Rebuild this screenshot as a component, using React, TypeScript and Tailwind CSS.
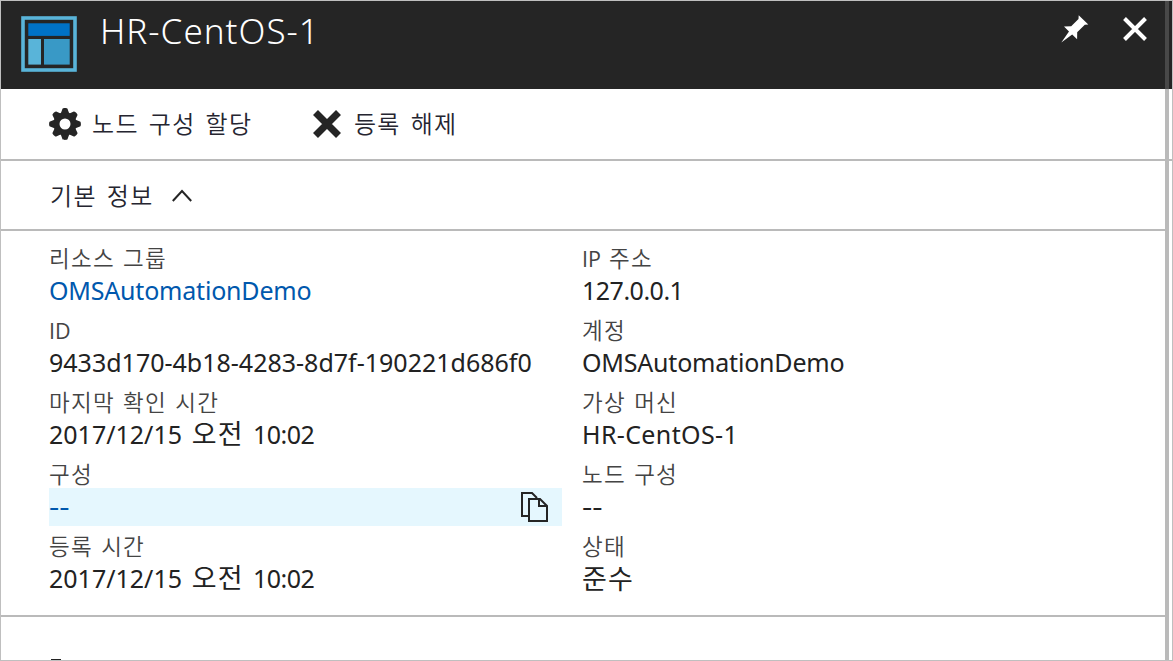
import React from "react";

const kr = "font-['Noto_Sans_CJK_KR',sans-serif]";

type Field = { label: React.ReactNode; value: React.ReactNode; link?: boolean; copy?: boolean };

const K = ({ children }: { children: React.ReactNode }) => (
  <span className="block font-['Noto_Sans_CJK_KR',sans-serif] text-[22.5px] font-[350] tracking-[1.25px] [word-spacing:2px]">
    {children}
  </span>
);

const Latin = ({ children }: { children: React.ReactNode }) => (
  <span className="block pt-[2px] font-['Open_Sans',sans-serif] text-[21.5px] font-normal">{children}</span>
);

const time = (
  <span className="[word-spacing:3.2px]">
    2017/12/15{" "}
    <span className="font-['Noto_Sans_CJK_KR',sans-serif] text-[27px] leading-[20px] font-normal tracking-[1.2px]">오전</span>
    <span className="tracking-[-0.5px]"> 10:02</span>
  </span>
);

const demo = <span className="tracking-[-0.2px]">OMSAutomationDemo</span>;
const dashes = <span className="inline-block origin-left scale-x-[1.28]">--</span>;

const left: Field[] = [
  { label: <K>리소스 그룹</K>, value: demo, link: true },
  { label: <Latin>ID</Latin>, value: "9433d170-4b18-4283-8d7f-190221d686f0" },
  { label: <K>마지막 확인 시간</K>, value: time },
  { label: <K>구성</K>, value: dashes, link: true, copy: true },
  { label: <K>등록 시간</K>, value: time },
];

const right: Field[] = [
  {
    label: (
      <div className="flex gap-2">
        <Latin>IP</Latin>
        <K>주소</K>
      </div>
    ),
    value: <span className="tracking-[-0.5px]">127.0.0.1</span>,
  },
  { label: <K>계정</K>, value: demo },
  { label: <K>가상 머신</K>, value: <span className="tracking-[0.36px]">HR-CentOS-1</span> },
  { label: <K>노드 구성</K>, value: dashes },
  {
    label: <K>상태</K>,
    value: <span className="block font-['Noto_Sans_CJK_KR',sans-serif] text-[27px] leading-[30px] tracking-[1.2px]">준수</span>,
  },
];

function CopyIcon() {
  return (
    <svg width="28" height="32" viewBox="0 0 28 32" fill="none" stroke="#252525" strokeWidth="2" className="shrink-0">
      <path d="M8 25H2V2H12L17 7" />
      <path d="M9 8H20L27 15V30H9Z" fill="#e5f7fe" />
      <path d="M19 8V15H27" />
    </svg>
  );
}

function FieldView({ label, value, link, copy }: Field) {
  return (
    <div className="h-[72px] w-[513px]">
      <div className="flex h-[34px] items-start pt-[4px] text-[22px] leading-[30px] whitespace-pre text-[#444]">
        <div>{label}</div>
      </div>
      <div
        className={
          "flex h-[38px] items-center justify-between pr-[14px] text-[25px] leading-[36px] whitespace-pre " +
          (link ? "text-[#0058ad] " : "text-[#222] ") +
          (copy ? "bg-[#e5f7fe]" : "")
        }
      >
        <div className="pb-[2px]">{value}</div>
        {copy && <CopyIcon />}
      </div>
    </div>
  );
}

function ResourceIcon() {
  return (
    <svg width="56" height="56" viewBox="0 0 56 56">
      <rect x="2" y="2" width="52" height="52" fill="none" stroke="#59b4d9" strokeWidth="3.6" />
      <rect x="7.3" y="7.3" width="41.4" height="12.6" fill="#0072c6" />
      <rect x="7.3" y="23" width="12.7" height="25.6" fill="#59b4d9" />
      <rect x="23" y="23" width="25.7" height="25.6" fill="#3999c6" />
    </svg>
  );
}

function PinIcon() {
  return (
    <svg width="28" height="28" viewBox="0 0 28 28" fill="#fff">
      <path d="M17.7 0.3L27.3 9.5L23.8 9.7L16.2 17.2L16.1 24.2L11.2 19.6L0.3 27.5L8 16.4L3 11.5L10.2 11.2L17.5 4Z" />
    </svg>
  );
}

function GearIcon() {
  return (
    <svg width="32" height="32" viewBox="-16 -16 32 32" fill="#252525">
      <circle r="8.6" fill="none" stroke="#252525" strokeWidth="6.2" />
      {[0, 45, 90, 135, 180, 225, 270, 315].map((a) => (
        <path key={a} d="M-4.2 -10.5L-2.6 -15C-2.4 -16.2 2.4 -16.2 2.6 -15L4.2 -10.5Z" transform={`rotate(${a})`} />
      ))}
    </svg>
  );
}

export default function App() {
  return (
    <div className="relative flex h-[661px] w-[1173px] flex-col overflow-hidden border border-[#bfbfbf] bg-white font-['Noto_Sans','Noto_Sans_CJK_KR',sans-serif]">
      <header className="flex h-[88px] shrink-0 items-start bg-[#252525] pr-6 pl-5 text-white">
        <div className="pt-[15px]"><ResourceIcon /></div>
        <h1 className="flex-1 pt-[8px] pl-[23px] text-[35px] leading-[44px] font-light tracking-[1px] whitespace-pre">HR-CentOS-1</h1>
        <div className="flex gap-[33px] pt-[14px]">
          <PinIcon />
          <svg width="26" height="28" viewBox="0 0 26 28" fill="none" stroke="#fff" strokeWidth="4">
            <path d="M2.5 3.5L23.5 24.5M23.5 3.5L2.5 24.5" />
          </svg>
        </div>
      </header>

      <div className={"flex h-[72px] shrink-0 items-center border-b-2 border-[#bababa] pl-12 text-[24px] text-[#252530] " + kr}>
        <GearIcon />
        <span className="pb-[2px] pl-[11px] font-[350] tracking-[1.3px] whitespace-pre [word-spacing:3.4px]">노드 구성 할당</span>
        <svg width="28" height="28" viewBox="0 0 28 28" fill="none" stroke="#252525" strokeWidth="7" className="ml-[60.5px]">
          <path d="M2.5 2.5L25.5 25.5M25.5 2.5L2.5 25.5" />
        </svg>
        <span className="pb-[2px] pl-[13px] font-[350] tracking-[1.3px] whitespace-pre [word-spacing:3.4px]">등록 해제</span>
      </div>

      <div className={"mr-[7px] flex h-[70px] shrink-0 items-center border-b-2 border-[#bababa] pl-[49px] text-[24px] text-[#252530] " + kr}>
        <span className="font-[350] tracking-[1.3px] whitespace-pre [word-spacing:3.4px]">기본 정보</span>
        <svg width="20" height="14" viewBox="0 0 20 14" fill="none" stroke="#252525" strokeWidth="2" className="mt-[2px] ml-[18px]">
          <path d="M0.8 12L10 2L19.2 12" />
        </svg>
      </div>

      <div className="mr-[7px] flex h-[386px] shrink-0 gap-5 border-b-2 border-[#bababa] pt-[7px] pl-12">
        <div className="flex flex-col">{left.map((f, i) => <FieldView key={i} {...f} />)}</div>
        <div className="flex flex-col">{right.map((f, i) => <FieldView key={i} {...f} />)}</div>
      </div>

      <div className="flex flex-1 items-end pl-[50px]">
        <div className="h-px w-[10px] bg-[#222]" />
      </div>

      <div className="absolute top-0 right-[3px] h-[659px] w-1 bg-[#bababa]" />
      <div className="absolute top-0 right-[3px] h-[88px] w-1 bg-[#484848]" />
    </div>
  );
}
